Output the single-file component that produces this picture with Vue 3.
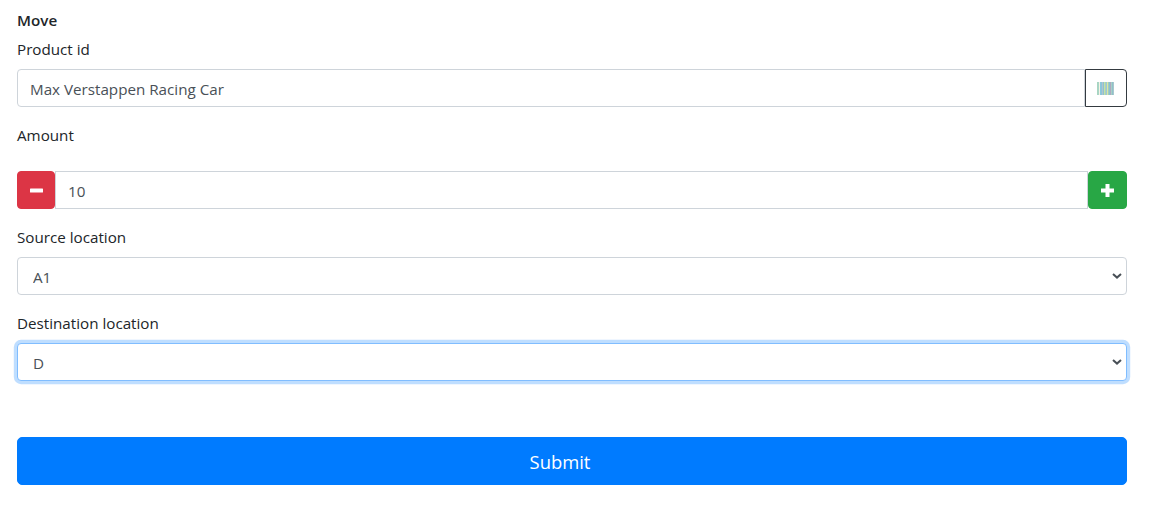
<template>
  <div class="page">
    <form class="move-form" @submit.prevent>
      <div class="form-title">Move</div>

      <div class="form-group">
        <label class="form-label">Product id</label>
        <div class="input-row">
          <input class="form-control form-control--join-right" type="text" v-model="product" />
          <button class="btn btn-scan" type="button" aria-label="Scan">
            <svg width="17" height="13" viewBox="0 0 17 13">
              <rect v-for="(bar, i) in bars" :key="i" :x="i" y="0" width="1" height="13" :fill="bar" />
            </svg>
          </button>
        </div>
      </div>

      <div class="form-group">
        <label class="form-label form-label--spaced">Amount</label>
        <div class="input-row">
          <button class="btn btn-step btn-minus" type="button" aria-label="Less" @click="amount--">
            <svg width="13" height="13" viewBox="0 0 13 13"><rect x="0" y="4.5" width="13" height="4" rx="0.6" fill="#fff" /></svg>
          </button>
          <input class="form-control form-control--join-both" type="text" v-model="amount" />
          <button class="btn btn-step btn-plus" type="button" aria-label="More" @click="amount++">
            <svg width="13" height="13" viewBox="0 0 13 13"><path d="M4.5 0h4v4.5H13v4H8.500V13h-4V8.500H0v-4h4.500z" fill="#fff" /></svg>
          </button>
        </div>
      </div>

      <div class="form-group">
        <label class="form-label">Source location</label>
        <select class="form-control form-control--select" v-model="source">
          <option>A1</option>
          <option>A2</option>
        </select>
      </div>

      <div class="form-group">
        <label class="form-label">Destination location</label>
        <select class="form-control form-control--select form-control--focus" v-model="destination">
          <option>D</option>
          <option>E</option>
        </select>
      </div>

      <button class="btn btn-submit" type="submit">Submit</button>
    </form>
  </div>
</template>

<script setup>
import { ref } from 'vue'

const product = ref('Max Verstappen Racing Car')
const amount = ref(10)
const source = ref('A1')
const destination = ref('D')

const bars = ['#a8d5c0', '#a8d5c8', '#f6f2e4', '#8cc8dc', '#8cc4dc', '#b4c4cc', '#8cc4d0', '#c8e0a8', '#a8d4b8', '#9cc4dc', '#dce8a0', '#a0ccc0', '#8cc0d0', '#b0a8c0', '#a8d0c4', '#90c0cc', '#a8c8cc']
</script>

<style>
body {
  background: #fff;
}
</style>

<style scoped>
.page {
  padding: 8px 23px 37px 17px;
  font-family: "Open Sans", "Noto Sans", sans-serif;
  font-size: 15.2px;
  line-height: 24px;
  color: #212529;
}
.form-title {
  font-weight: 600;
  margin-bottom: 5px;
}
.form-group {
  margin-bottom: 16px;
}
.form-label {
  display: block;
  margin-bottom: 8px;
}
.form-label--spaced {
  margin-bottom: 24px;
}
.input-row {
  display: flex;
}
.form-control {
  display: block;
  box-sizing: border-box;
  width: 100%;
  height: 38px;
  padding: 7px 12px 5px;
  font: inherit;
  color: #495057;
  background: #fff;
  border: 1px solid #ced4da;
  border-radius: 4px;
  outline: none;
}
.form-control--select {
  appearance: none;
  padding-left: 15px;
  background: #fff url("data:image/svg+xml,%3Csvg xmlns='http://www.w3.org/2000/svg' width='10' height='6' viewBox='0 0 10 6'%3E%3Cpath d='M1 1l4 3.600L9 1' fill='none' stroke='%23495057' stroke-width='2'/%3E%3C/svg%3E") no-repeat right 4px center;
}
.form-control--join-right {
  border-radius: 4px 0 0 4px;
}
.form-control--join-both {
  border-radius: 0;
}
.form-control--focus {
  border-color: #80bdff;
  box-shadow: 0 0 0 3.2px rgba(0, 123, 255, 0.25);
}
.btn {
  display: flex;
  align-items: center;
  justify-content: center;
  box-sizing: border-box;
  flex: none;
  font: inherit;
  border: 1px solid transparent;
  border-radius: 4px;
  padding: 0;
  cursor: pointer;
}
.btn-scan {
  width: 42px;
  height: 38px;
  padding-right: 1px;
  background: #fff;
  border-color: #343a40;
  border-radius: 0 4px 4px 0;
}
.btn-step {
  width: 39px;
  height: 38px;
}
.btn-minus {
  width: 38px;
  background: #dc3545;
  border-color: #dc3545;
}
.btn-plus {
  background: #28a745;
  border-color: #28a745;
}
.btn-submit {
  width: 100%;
  height: 48px;
  margin-top: 56px;
  padding: 2px 24px 0 0;
  font-size: 18.4px;
  color: #fff;
  background: #007bff;
  border-color: #007bff;
  border-radius: 5px;
}
</style>
